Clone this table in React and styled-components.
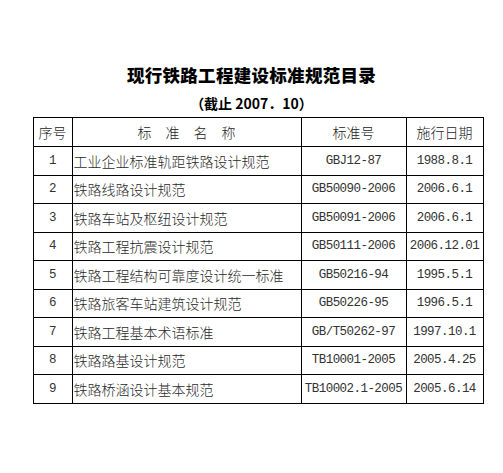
import React from 'react'
import styled, { createGlobalStyle } from 'styled-components'

const GlobalStyle = createGlobalStyle`
  html, body {
    margin: 0;
    padding: 0;
    background: #fff;
  }
  body {
    font-family: "Noto Sans CJK SC", "Liberation Serif", serif;
    color: #1a1a1a;
  }
`

const rows = [
  ['1', '工业企业标准轨距铁路设计规范', 'GBJ12-87', '1988.8.1'],
  ['2', '铁路线路设计规范', 'GB50090-2006', '2006.6.1'],
  ['3', '铁路车站及枢纽设计规范', 'GB50091-2006', '2006.6.1'],
  ['4', '铁路工程抗震设计规范', 'GB50111-2006', '2006.12.01'],
  ['5', '铁路工程结构可靠度设计统一标准', 'GB50216-94', '1995.5.1'],
  ['6', '铁路旅客车站建筑设计规范', 'GB50226-95', '1996.5.1'],
  ['7', '铁路工程基本术语标准', 'GB/T50262-97', '1997.10.1'],
  ['8', '铁路路基设计规范', 'TB10001-2005', '2005.4.25'],
  ['9', '铁路桥涵设计基本规范', 'TB10002.1-2005', '2005.6.14'],
]

function App() {
  return (
    <>
      <GlobalStyle />
      <Page>
        <Title>现行铁路工程建设标准规范目录</Title>
        <Subtitle>（截止 2007．10）</Subtitle>
        <Table>
          <colgroup>
            <col style={{ width: 39 }} />
            <col style={{ width: 229 }} />
            <col style={{ width: 105 }} />
            <col style={{ width: 77 }} />
          </colgroup>
          <thead>
            <tr>
              <HeadCell>序号</HeadCell>
              <HeadCell>标　准　名　称</HeadCell>
              <HeadCell>标准号</HeadCell>
              <HeadCell>施行日期</HeadCell>
            </tr>
          </thead>
          <tbody>
            {rows.map((row) => (
              <tr key={row[0]}>
                <Cell $mono>{row[0]}</Cell>
                <Cell $left>{row[1]}</Cell>
                <Cell $mono>{row[2]}</Cell>
                <Cell $mono>{row[3]}</Cell>
              </tr>
            ))}
          </tbody>
        </Table>
      </Page>
    </>
  )
}

const Page = styled.div`
  width: 503px;
  height: 473px;
  padding-top: 62px;
  box-sizing: border-box;
  display: flex;
  flex-direction: column;
  align-items: center;
`

const Title = styled.h1`
  margin: 0;
  font-family: "Noto Sans CJK SC", sans-serif;
  font-size: 17.5px;
  font-weight: 900;
  line-height: 26px;
  color: #000;
  letter-spacing: 0.3px;
`

const Subtitle = styled.h2`
  margin: 5px 0 0;
  font-family: "Noto Sans CJK SC", sans-serif;
  font-size: 14px;
  font-weight: 700;
  line-height: 20px;
  color: #000;
`

const Table = styled.table`
  margin: 4px 0 0 13px;
  width: 451px;
  table-layout: fixed;
  border-collapse: collapse;
  border: 1px solid #000;
`

const HeadCell = styled.th`
  height: 28px;
  padding: 0;
  border: 1px solid #000;
  font-family: "Noto Sans CJK SC", sans-serif;
  font-size: 14px;
  font-weight: 300;
  color: #222;
  text-align: center;
  white-space: nowrap;
`

const Cell = styled.td`
  height: 27.5px;
  padding: ${(p) => (p.$left ? '0 0 0 1px' : '0')};
  border: 1px solid #000;
  font-family: ${(p) =>
    p.$mono ? '"Liberation Mono", monospace' : '"Noto Sans CJK SC", sans-serif'};
  font-size: ${(p) => (p.$mono ? '12.5px' : '14px')};
  letter-spacing: ${(p) => (p.$mono ? '-0.55px' : '0')};
  font-weight: ${(p) => (p.$mono ? 400 : 300)};
  color: ${(p) => (p.$mono ? '#333' : '#2a2a2a')};
  text-align: ${(p) => (p.$left ? 'left' : 'center')};
  white-space: nowrap;
  overflow: hidden;
`

export default App
